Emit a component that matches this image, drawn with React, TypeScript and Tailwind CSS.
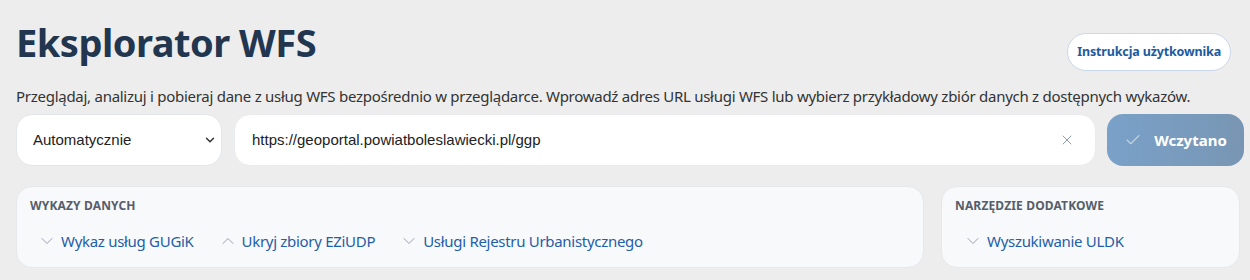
import { ChevronDown, ChevronUp, X, Check } from "lucide-react";

export default function App() {
  const wykazy = [
    { label: "Wykaz usług GUGiK", open: false },
    { label: "Ukryj zbiory EZiUDP", open: true },
    { label: "Usługi Rejestru Urbanistycznego", open: false },
  ];

  return (
    <div className="min-h-screen w-full bg-[#ededed] px-4 font-['Noto_Sans',sans-serif] text-[#333]">
      <div className="flex items-start justify-between pt-[18px]">
        <h1 className="text-[38px] font-bold leading-[48px] tracking-[-0.5px] text-[#22364f]">Eksplorator WFS</h1>
        <button className="mt-[15px] mr-[3px] h-[38px] rounded-full border border-[#c9d8ea] bg-white px-[9px] text-[12.5px] font-bold tracking-[-0.15px] text-[#1d5a9e]">
          Instrukcja użytkownika
        </button>
      </div>
      <p className="mt-[15px] text-[15px] leading-[20px] tracking-[-0.27px] text-[#333]">
        Przeglądaj, analizuj i pobieraj dane z usług WFS bezpośrednio w przeglądarce. Wprowadź adres URL usługi WFS lub wybierz przykładowy zbiór danych z dostępnych wykazów.
      </p>

      {/* wiersz z adresem */}
      <div className="mt-[8px] -mr-[10px] flex items-center font-['Liberation_Sans',sans-serif]">
        <div className="flex h-[52px] w-[206px] items-center justify-between rounded-[16px] border border-[#e3e6ea] bg-white pl-[16px] pr-[4px] text-[15px] text-[#222]">
          Automatycznie
          <ChevronDown size={14} strokeWidth={2.5} className="text-[#333]" />
        </div>
        <div className="ml-[12px] flex h-[52px] flex-1 items-center justify-between rounded-[16px] border border-[#e9ebee] bg-white pl-[17px] pr-[20px] text-[15px] text-[#222]">
          https://geoportal.powiatboleslawiecki.pl/ggp
          <X size={16} strokeWidth={1.5} className="text-[#8a9bb3]" />
        </div>
        <button className="ml-[11px] flex h-[52px] w-[137px] items-center justify-center gap-[12px] rounded-[16px] bg-gradient-to-r from-[#7aa1c9] to-[#7896b3] font-['Noto_Sans',sans-serif] text-[15px] font-bold text-white">
          <Check size={18} strokeWidth={1.5} className="text-[#c4d0dd]" />
          Wczytano
        </button>
      </div>

      {/* wykazy */}
      <div className="mt-[20px] -mr-[6px] flex gap-[17px]">
        <section className="h-[82px] flex-1 rounded-[16px] border border-[#e6e8eb] bg-[#f8f9fa] px-[13px] pt-[11px]">
          <h2 className="text-[12px] font-bold uppercase leading-[16px] tracking-[0.15px] text-[#555e6b]">Wykazy danych</h2>
          <div className="mt-[17px] flex gap-[24px] pl-[7px]">
            {wykazy.map((w) => (
              <a key={w.label} className="flex items-center gap-[4px] text-[15px] leading-[20px] tracking-[-0.3px] text-[#1f5ea8]">
                {w.open ? (
                  <ChevronUp size={20} strokeWidth={1} className="text-[#8190a5]" />
                ) : (
                  <ChevronDown size={20} strokeWidth={1} className="text-[#8190a5]" />
                )}
                {w.label}
              </a>
            ))}
          </div>
        </section>
        <section className="h-[82px] w-[299px] rounded-[16px] border border-[#e6e8eb] bg-[#f8f9fa] px-[13px] pt-[11px]">
          <h2 className="text-[12px] font-bold uppercase leading-[16px] tracking-[0.15px] text-[#555e6b]">Narzędzie dodatkowe</h2>
          <div className="mt-[17px] flex pl-[8px]">
            <a className="flex items-center gap-[4px] text-[15px] leading-[20px] tracking-[-0.3px] text-[#1f5ea8]">
              <ChevronDown size={20} strokeWidth={1} className="text-[#8190a5]" />
              Wyszukiwanie ULDK
            </a>
          </div>
        </section>
      </div>
    </div>
  );
}
